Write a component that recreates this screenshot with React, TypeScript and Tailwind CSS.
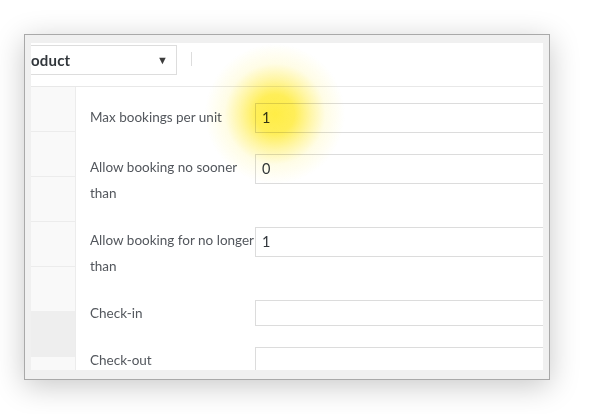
import React from "react";

const Row = ({
  label,
  value,
  h,
  labelOffset,
}: {
  label: React.ReactNode;
  value: string;
  h: string;
  labelOffset?: boolean;
}) => (
  <div className="flex items-start">
    <div
      className={`w-[165px] shrink-0 whitespace-nowrap text-[13.5px] leading-[26px] text-[#53575d] ${
        labelOffset ? "mt-[1px]" : ""
      }`}
    >
      {label}
    </div>
    <div
      className={`w-[320px] shrink-0 border border-[#dcdcdc] bg-white pl-[6px] text-[14.5px] text-[#32373c] flex items-center ${h}`}
    >
      {value}
    </div>
  </div>
);

export default function App() {
  return (
    <div
      className="relative w-[600px] h-[414px] overflow-hidden bg-white pt-[34px] pl-[24px]"
      style={{ fontFamily: "Lato, 'Open Sans', sans-serif" }}
    >
      <div className="w-[526px] h-[346px] border border-[#a9a9a9] bg-[#f0f0f0] pt-[8px] pl-[6px] pr-[6px] pb-[9px] shadow-[0_6px_28px_rgba(0,0,0,0.22)]">
        <div className="relative w-full h-full overflow-hidden bg-white flex flex-col">
          {/* top bar */}
          <div className="h-[44px] shrink-0 border-b border-[#e8e8e8] flex items-start">
            <div className="mt-[2px] w-[146px] h-[30px] border border-l-0 border-[#dddddd] flex items-center justify-between pr-[8px]">
              <span className="text-[15px] font-bold text-[#32373c] tracking-[0.2px]">oduct</span>
              <span className="text-[11px] text-[#3c3c3c]">▼</span>
            </div>
            <div className="ml-[14px] mt-[9px] w-px h-[14px] bg-[#dddddd]" />
          </div>
          {/* body */}
          <div className="flex flex-1 min-h-0">
            <div className="w-[45px] shrink-0 border-r border-[#ececec] bg-[#f9f9f9] flex flex-col">
              <div className="h-[45px] shrink-0 border-b border-[#ececec]" />
              <div className="h-[45px] shrink-0 border-b border-[#ececec]" />
              <div className="h-[45px] shrink-0 border-b border-[#ececec]" />
              <div className="h-[45px] shrink-0 border-b border-[#ececec]" />
              <div className="h-[44px] shrink-0" />
              <div className="h-[46px] shrink-0 bg-[#eeeeee]" />
              <div className="flex-1" />
            </div>
            <div className="flex-1 pl-[14px] pt-[16px] flex flex-col gap-[21px]">
              <Row label="Max bookings per unit" value="1" h="h-[30px]" labelOffset />
              <Row
                label={
                  <>
                    Allow booking no sooner
                    <br />
                    than
                  </>
                }
                value="0"
                h="h-[30px]"
              />
              <Row
                label={
                  <>
                    Allow booking for no longer
                    <br />
                    than
                  </>
                }
                value="1"
                h="h-[30px]"
              />
              <Row label="Check-in" value="" h="h-[26px]" />
              <Row label="Check-out" value="" h="h-[26px]" />
            </div>
          </div>
          {/* glow highlight */}
          <div className="pointer-events-none absolute left-[174px] top-[1px] w-[140px] h-[140px] mix-blend-multiply bg-[radial-gradient(circle_closest-side,rgba(255,236,60,0.95)_0%,rgba(255,236,66,0.88)_28%,rgba(255,238,90,0.55)_50%,rgba(255,243,130,0.2)_72%,rgba(255,250,180,0)_100%)]" />
        </div>
      </div>
    </div>
  );
}
